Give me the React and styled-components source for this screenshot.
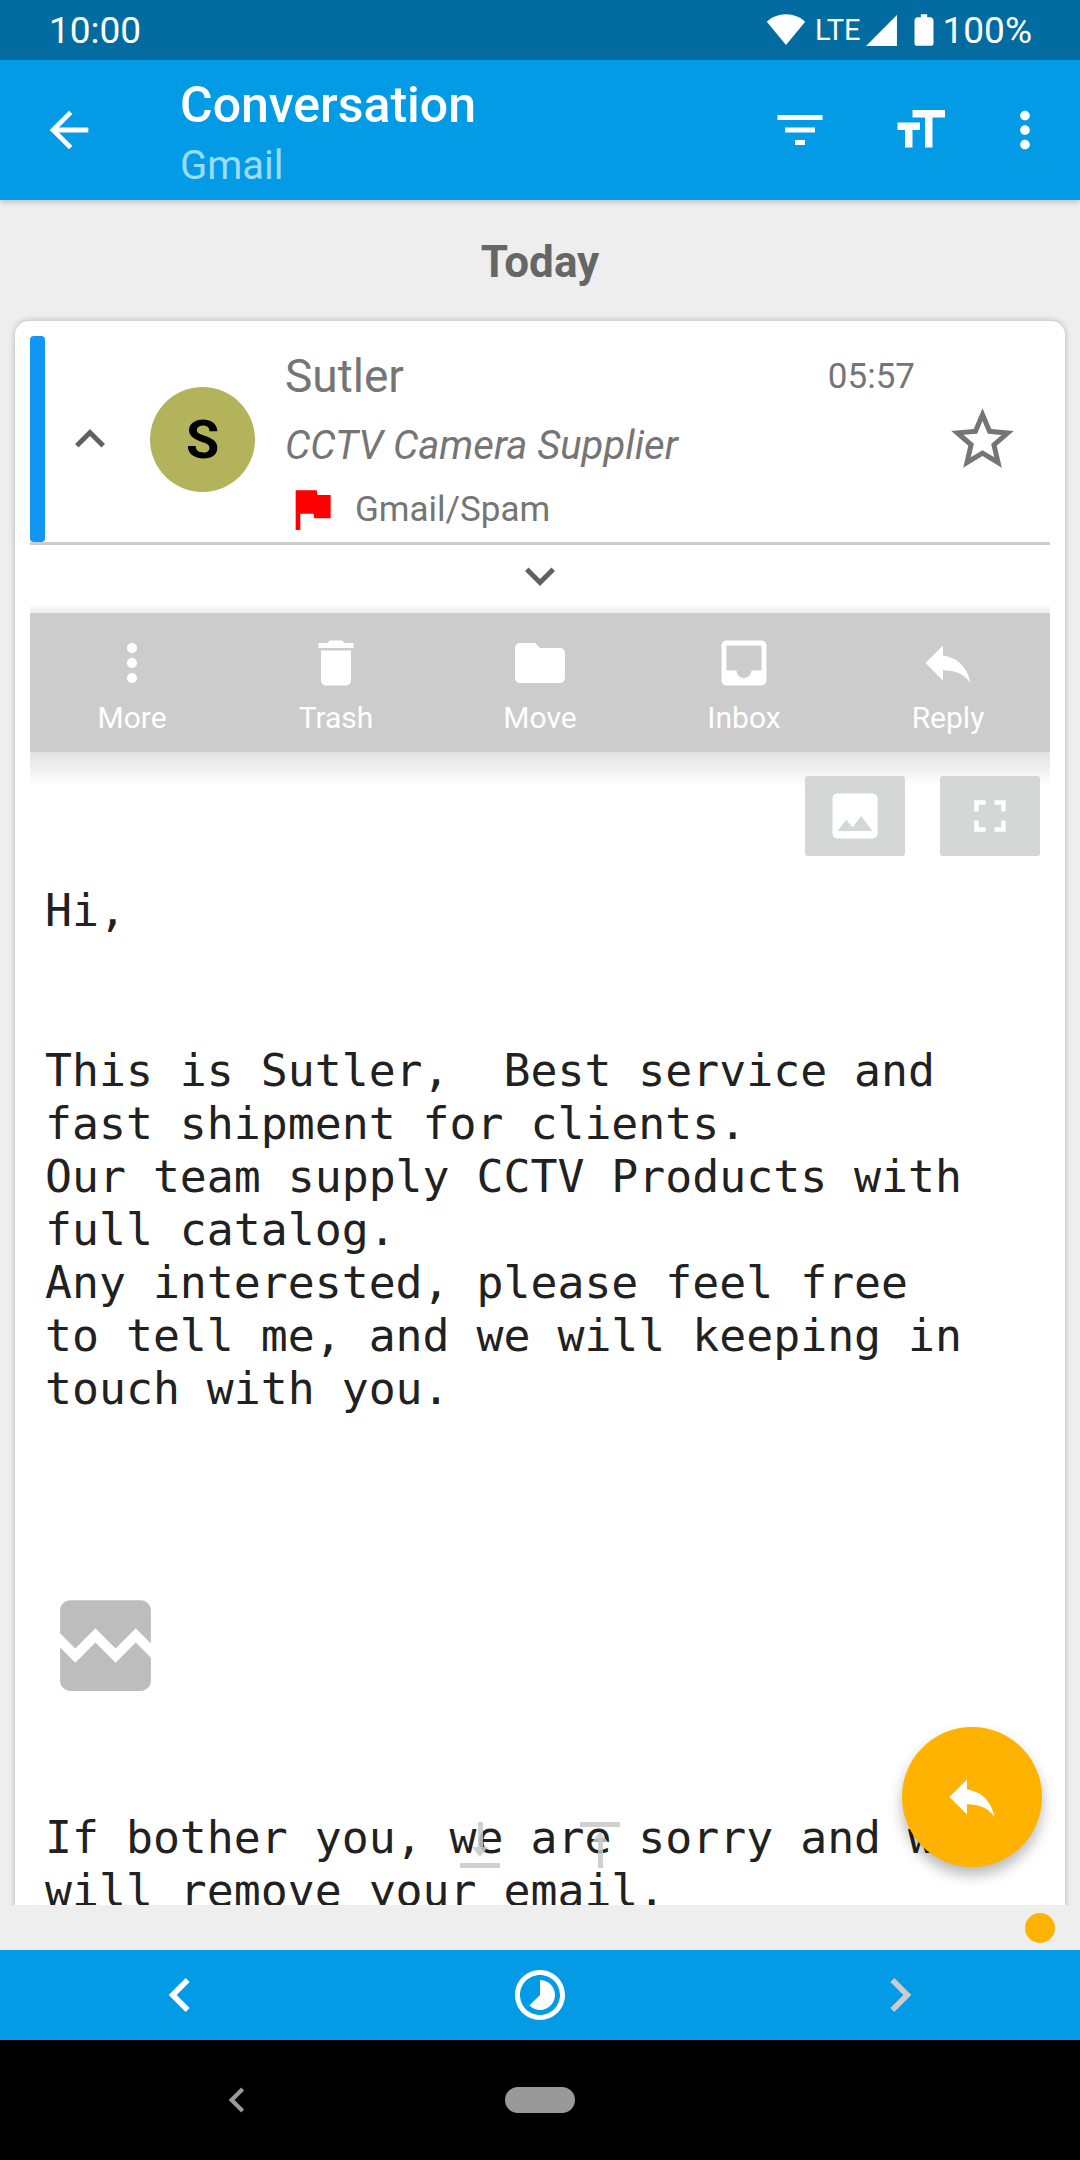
import React from "react";
import styled, { createGlobalStyle } from "styled-components";

const Global = createGlobalStyle`
  html, body { margin: 0; padding: 0; background: #000; }
  * { box-sizing: border-box; }
  #root { width: 1080px; height: 2160px; font-family: Roboto, "Liberation Sans", sans-serif; }
`;

const P = {
  back: "M20 11H7.83l5.59-5.59L12 4l-8 8 8 8 1.41-1.41L7.83 13H20v-2z",
  filter: "M10 18h4v-2h-4v2zM3 6v2h18V6H3zm3 7h12v-2H6v2z",
  size: "M9 4v3h5v12h3V7h5V4H9zm-6 8h3v7h3v-7h3V9H3v3z",
  more: "M12 8c1.1 0 2-.9 2-2s-.9-2-2-2-2 .9-2 2 .9 2 2 2zm0 2c-1.1 0-2 .9-2 2s.9 2 2 2 2-.9 2-2-.9-2-2-2zm0 6c-1.1 0-2 .9-2 2s.9 2 2 2 2-.9 2-2-.9-2-2-2z",
  trash: "M6 19c0 1.1.9 2 2 2h8c1.1 0 2-.9 2-2V7H6v12zM19 4h-3.5l-1-1h-5l-1 1H5v2h14V4z",
  folder: "M10 4H4c-1.1 0-1.99.9-1.99 2L2 18c0 1.1.9 2 2 2h16c1.1 0 2-.9 2-2V8c0-1.1-.9-2-2-2h-8l-2-2z",
  inbox: "M19 3H4.99c-1.11 0-1.98.89-1.98 2L3 19c0 1.1.88 2 1.99 2H19c1.1 0 2-.9 2-2V5c0-1.11-.9-2-2-2zm0 12h-4c0 1.66-1.35 3-3 3s-3-1.34-3-3H4.99V5H19v10z",
  reply: "M10 9V5l-7 7 7 7v-4.1c5 0 8.5 1.6 11 5.1-1-5-4-10-11-11z",
  image: "M21 19V5c0-1.1-.9-2-2-2H5c-1.1 0-2 .9-2 2v14c0 1.1.9 2 2 2h14c1.1 0 2-.9 2-2zM8.5 13.5l2.5 3.01L14.5 12l4.5 6H5l3.5-4.5z",
  full: "M7 14H5v5h5v-2H7v-3zm-2-4h2V7h3V5H5v5zm12 7h-3v2h5v-5h-2v3zM14 5v2h3v3h2V5h-5z",
  broken: "M21 5v6.59l-3-3.01-4 4.01-4-4-4 4-3-3.01V5c0-1.1.9-2 2-2h14c1.1 0 2 .9 2 2zm-3 6.42l3 3.01V19c0 1.1-.9 2-2 2H5c-1.1 0-2-.9-2-2v-6.58l3 2.99 4-4 4 4 4-3.99z",
  star: "M22 9.24l-7.19-.62L12 2 9.19 8.63 2 9.24l5.46 4.73L5.82 21 12 17.27 18.18 21l-1.63-7.03L22 9.24zM12 15.4l-3.76 2.27 1-4.28-3.32-2.88 4.38-.38L12 6.1l1.71 4.04 4.38.38-3.32 2.88 1 4.28L12 15.4z",
  flag: "M14.4 6L14 4H5v17h2v-7h5.6l.4 2h7V6z",
  up: "M12 8l-6 6 1.41 1.41L12 10.83l4.59 4.58L18 14z",
  down: "M16.59 8.59L12 13.17 7.41 8.59 6 10l6 6 6-6z",
  left: "M15.41 7.41L14 6l-6 6 6 6 1.41-1.41L10.83 12z",
  right: "M10 6L8.59 7.41 13.17 12l-4.58 4.59L10 18l6-6z",
  wifi: "M12 21L0.5 7C3.5 4.2 7.5 2.5 12 2.5S20.5 4.2 23.5 7L12 21z",
  signal: "M2 22h20V2z",
  battery: "M16 4h-2V2h-4v2H8C6.9 4 6 4.9 6 6v14.5C6 21.3 6.7 22 7.5 22h9c.8 0 1.5-.7 1.5-1.5V6c0-1.1-.9-2-2-2z",
  clock: "M12 2C6.48 2 2 6.48 2 12s4.48 10 10 10 10-4.48 10-10S17.52 2 12 2zm0 18c-4.41 0-8-3.59-8-8s3.59-8 8-8 8 3.59 8 8-3.59 8-8 8zM12 6a6 6 0 1 1-4.24 10.24L12 12V6z",
};

const Svg = styled.svg`
  display: block;
  flex: none;
  width: ${(p) => p.$s}px;
  height: ${(p) => p.$s}px;
  fill: ${(p) => p.$c || "#fff"};
`;
const Icon = ({ d, s, c, className }) => (
  <Svg viewBox="0 0 24 24" $s={s} $c={c} className={className}><path d={d} /></Svg>
);

const Screen = styled.div`
  position: relative;
  width: 1080px;
  height: 2160px;
  display: flex;
  flex-direction: column;
  overflow: hidden;
  background: #eeeeee;
`;
const StatusBar = styled.div`
  height: 60px;
  flex: none;
  background: #026ca0;
  color: #fff;
  display: flex;
  align-items: center;
  justify-content: space-between;
  padding: 0 48px 0 49px;
  font-size: 37px;
  font-weight: 400;
`;
const StatusRight = styled.div`
  display: flex;
  align-items: center;
`;
const Lte = styled.span`
  font-size: 29px;
  font-weight: 400;
  margin: 0 2px 0 9px;
`;
const Battery = styled(Icon)`
  margin-left: 5px;
`;
const AppBar = styled.header`
  position: relative;
  z-index: 2;
  height: 140px;
  flex: none;
  background: #039be5;
  box-shadow: 0 2px 5px rgba(0, 0, 0, 0.2);
  display: flex;
  align-items: center;
  padding: 0 26px 0 40px;
`;
const Titles = styled.div`
  margin: 8px 0 0 82px;
  flex: 1;
`;
const Title = styled.div`
  font-size: 50px;
  font-weight: 500;
  color: #fff;
  line-height: 60px;
`;
const Subtitle = styled.div`
  margin-top: 4px;
  font-size: 40px;
  color: #9bdcfb;
  line-height: 54px;
`;
const Actions = styled.div`
  display: flex;
  align-items: center;
  gap: 46px;
`;
const FilterIcon = styled(Icon)`
  margin-right: 14px;
`;
const Main = styled.main`
  flex: 1;
  min-height: 0;
  overflow: hidden;
  padding: 0 15px;
`;
const DayLabel = styled.div`
  height: 121px;
  display: flex;
  align-items: center;
  justify-content: center;
  padding-top: 3px;
  font-size: 44px;
  font-weight: 700;
  color: #666;
`;
const Card = styled.article`
  background: #fff;
  border-radius: 14px 14px 0 0;
  box-shadow: 0 0 6px rgba(0, 0, 0, 0.25);
  padding: 15px 15px 0;
  height: 1700px;
`;
const Header = styled.div`
  height: 209px;
  display: flex;
  align-items: center;
  border-bottom: 3px solid #cccccc;
`;
const Stripe = styled.div`
  width: 15px;
  height: 206px;
  flex: none;
  background: #1296f3;
  border-radius: 4px;
`;
const Toggle = styled.div`
  margin-left: 15px;
  width: 60px;
  display: flex;
  justify-content: center;
`;
const Avatar = styled.div`
  margin-left: 30px;
  width: 105px;
  height: 105px;
  flex: none;
  border-radius: 50%;
  background: #b3b35c;
  color: #000;
  display: flex;
  align-items: center;
  justify-content: center;
  font-size: 54px;
  font-weight: 700;
`;
const Info = styled.div`
  margin-left: 30px;
  flex: 1;
  display: flex;
  flex-direction: column;
  align-self: stretch;
  padding-top: 12px;
`;
const TopRow = styled.div`
  display: flex;
  justify-content: space-between;
  align-items: center;
  height: 56px;
`;
const Sender = styled.div`
  font-size: 46px;
  color: #757575;
  line-height: 56px;
`;
const Time = styled.div`
  font-size: 35px;
  color: #757575;
  margin-right: 30px;
`;
const Subject = styled.div`
  margin-top: 14px;
  font-size: 40px;
  font-style: italic;
  color: #757575;
  line-height: 56px;
`;
const FolderRow = styled.div`
  margin-top: 7px;
  display: flex;
  align-items: center;
  font-size: 35px;
  color: #757575;
  gap: 15px;
`;
const FlagIcon = styled(Icon)`
  margin-left: -1px;
`;
const StarWrap = styled.div`
  margin: 0 30px 0 0;
`;
const ExpandRow = styled.div`
  height: 68px;
  display: flex;
  align-items: center;
  justify-content: center;
  padding-bottom: 7px;
`;
const ActionBar = styled.nav`
  height: 139px;
  background: #cccccc;
  display: grid;
  grid-template-columns: repeat(5, 1fr);
  position: relative;
  &::before,
  &::after {
    content: "";
    position: absolute;
    left: 0;
    right: 0;
  }
  &::before {
    top: -9px;
    height: 9px;
    background: linear-gradient(to top, #ececec, #ffffff);
  }
  &::after {
    top: 100%;
    height: 34px;
    background: linear-gradient(to bottom, #e2e2e2, #ffffff);
  }
`;
const ActionItem = styled.div`
  display: flex;
  flex-direction: column;
  align-items: center;
  padding-top: 20px;
  color: #fff;
  font-size: 30px;
  gap: 7px;
`;
const ImgTools = styled.div`
  position: relative;
  z-index: 1;
  display: flex;
  justify-content: flex-end;
  gap: 35px;
  padding: 24px 10px 0 0;
`;
const ImgBtn = styled.div`
  width: 100px;
  height: 80px;
  border-radius: 3px;
  background: #d5d7d7;
  display: flex;
  align-items: center;
  justify-content: center;
`;
const Mono = styled.pre`
  margin: 0;
  padding-left: 15px;
  font-family: "DejaVu Sans Mono", "Liberation Mono", monospace;
  font-size: 44.8px;
  line-height: 53px;
  color: #212121;
  white-space: pre;
`;
const Greeting = styled(Mono)`
  margin-top: 28px;
`;
const Para = styled(Mono)`
  margin-top: 107px;
`;
const Broken = styled.div`
  margin: 170px 0 0 15px;
`;
const Closing = styled(Mono)`
  margin-top: 105px;
`;
const Strip = styled.div`
  height: 45px;
  flex: none;
  background: #eeeeee;
  display: flex;
  align-items: center;
  justify-content: flex-end;
  padding-right: 25px;
  position: relative;
  z-index: 1;
`;
const Dot = styled.div`
  width: 30px;
  height: 30px;
  border-radius: 50%;
  background: #ffb300;
`;
const BottomNav = styled.nav`
  height: 90px;
  flex: none;
  background: #039be5;
  position: relative;
  z-index: 1;
  display: grid;
  grid-template-columns: repeat(3, 360px);
  justify-items: center;
  align-items: center;
`;
const SysNav = styled.div`
  height: 120px;
  flex: none;
  background: #000;
  position: relative;
  z-index: 1;
  display: grid;
  grid-template-columns: 1fr auto 1fr;
  align-items: center;
`;
const SysBack = styled.div`
  justify-self: start;
  margin-left: 212px;
`;
const Pill = styled.div`
  width: 70px;
  height: 26px;
  border-radius: 13px;
  background: #999;
`;
const Fab = styled.div`
  position: absolute;
  left: 902px;
  top: 1727px;
  width: 140px;
  height: 140px;
  border-radius: 50%;
  background: #ffb300;
  box-shadow: 0 8px 14px rgba(0, 0, 0, 0.28);
  display: flex;
  align-items: center;
  justify-content: center;
`;
const Handle = styled.div`
  position: absolute;
  top: 1822px;
  left: ${(p) => p.$left}px;
  width: 40px;
  height: 46px;
`;
const HandleBar = styled.div`
  position: absolute;
  left: 0;
  right: 0;
  height: 5px;
  background: rgba(200, 200, 200, 0.85);
  ${(p) => (p.$bottom ? "bottom: 0;" : "top: 0;")}
`;
const HandleStem = styled.div`
  position: absolute;
  left: 18px;
  width: 5px;
  background: rgba(200, 200, 200, 0.85);
  ${(p) => (p.$bottom ? "top: 0; height: 26px;" : "top: 16px; height: 30px;")}
`;
const HandleTip = styled.div`
  position: absolute;
  left: 12px;
  width: 0;
  height: 0;
  border-left: 8.5px solid transparent;
  border-right: 8.5px solid transparent;
  ${(p) =>
    p.$bottom
      ? "top: 25px; border-top: 10px solid rgba(200, 200, 200, 0.85);"
      : "top: 10px; border-bottom: 10px solid rgba(200, 200, 200, 0.85);"}
`;

const actions = [
  ["More", P.more],
  ["Trash", P.trash],
  ["Move", P.folder],
  ["Inbox", P.inbox],
  ["Reply", P.reply],
];

export default function App() {
  return (
    <Screen>
      <Global />
      <StatusBar>
        <span>10:00</span>
        <StatusRight>
          <Icon d={P.wifi} s={40} />
          <Lte>LTE</Lte>
          <Icon d={P.signal} s={37} />
          <Battery d={P.battery} s={38} />
          <span>100%</span>
        </StatusRight>
      </StatusBar>
      <AppBar>
        <Icon d={P.back} s={58} />
        <Titles>
          <Title>Conversation</Title>
          <Subtitle>Gmail</Subtitle>
        </Titles>
        <Actions>
          <FilterIcon d={P.filter} s={60} />
          <Icon d={P.size} s={60} />
          <Icon d={P.more} s={58} />
        </Actions>
      </AppBar>
      <Main>
        <DayLabel>Today</DayLabel>
        <Card>
          <Header>
            <Stripe />
            <Toggle><Icon d={P.up} s={60} c="#616161" /></Toggle>
            <Avatar>S</Avatar>
            <Info>
              <TopRow>
                <Sender>Sutler</Sender>
                <Time>05:57</Time>
              </TopRow>
              <Subject>CCTV Camera Supplier</Subject>
              <FolderRow>
                <FlagIcon d={P.flag} s={56} c="#ff0000" />
                Gmail/Spam
              </FolderRow>
            </Info>
            <StarWrap><Icon d={P.star} s={75} c="#757575" /></StarWrap>
          </Header>
          <ExpandRow><Icon d={P.down} s={60} c="#616161" /></ExpandRow>
          <ActionBar>
            {actions.map(([label, d]) => (
              <ActionItem key={label}>
                <Icon d={d} s={60} />
                {label}
              </ActionItem>
            ))}
          </ActionBar>
          <ImgTools>
            <ImgBtn><Icon d={P.image} s={60} /></ImgBtn>
            <ImgBtn><Icon d={P.full} s={54} /></ImgBtn>
          </ImgTools>
          <Greeting>Hi,</Greeting>
          <Para>{`This is Sutler,  Best service and
fast shipment for clients.
Our team supply CCTV Products with
full catalog.
Any interested, please feel free
to tell me, and we will keeping in
touch with you.`}</Para>
          <Broken><Icon d={P.broken} s={121} c="#bdbdbd" /></Broken>
          <Closing>{`If bother you, we are sorry and we
will remove your email.`}</Closing>
        </Card>
      </Main>
      <Strip><Dot /></Strip>
      <BottomNav>
        <Icon d={P.left} s={68} />
        <Icon d={P.clock} s={60} />
        <Icon d={P.right} s={68} c="#cccccc" />
      </BottomNav>
      <SysNav>
        <SysBack><Icon d={P.left} s={50} c="#999" /></SysBack>
        <Pill />
        <span />
      </SysNav>
      <Handle $left={460}><HandleBar $bottom /><HandleStem $bottom /><HandleTip $bottom /></Handle>
      <Handle $left={580}><HandleBar /><HandleStem /><HandleTip /></Handle>
      <Fab><Icon d={P.reply} s={60} /></Fab>
    </Screen>
  );
}
